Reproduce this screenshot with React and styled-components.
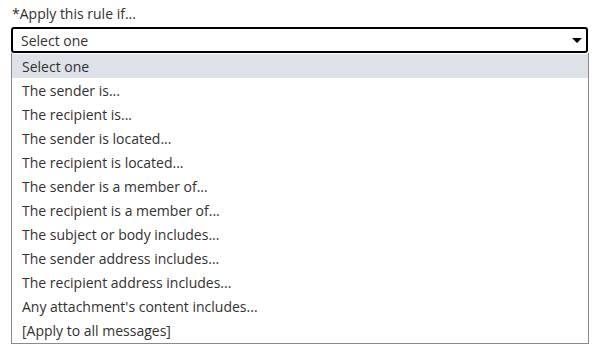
import styled, { createGlobalStyle } from 'styled-components';

const GlobalStyle = createGlobalStyle`
  *, *::before, *::after {
    box-sizing: border-box;
  }
  html, body {
    margin: 0;
    background: #ffffff;
  }
  body {
    font-family: "Open Sans", "Noto Sans", sans-serif;
    color: #323130;
  }
`;

const options = [
  'Select one',
  'The sender is...',
  'The recipient is...',
  'The sender is located...',
  'The recipient is located...',
  'The sender is a member of...',
  'The recipient is a member of...',
  'The subject or body includes...',
  'The sender address includes...',
  'The recipient address includes...',
  "Any attachment's content includes...",
  '[Apply to all messages]',
];

function App() {
  return (
    <>
      <GlobalStyle />
      <Field>
        <Label>*Apply this rule if...</Label>
        <Select>
          <span>Select one</span>
          <Caret viewBox="0 0 10 5">
            <path d="M0 0h10L5 5z" fill="#000" />
          </Caret>
        </Select>
        <List>
          {options.map((o, i) => (
            <Option key={o} $active={i === 0}>{o}</Option>
          ))}
        </List>
      </Field>
    </>
  );
}

const Field = styled.div`
  display: flex;
  flex-direction: column;
  padding: 4px 0 0 11px;
`;

const Label = styled.div`
  font-size: 14px;
  line-height: 20px;
  padding-left: 1px;
  margin-bottom: 3px;
  color: #323130;
`;

const Select = styled.div`
  display: flex;
  align-items: center;
  justify-content: space-between;
  height: 26px;
  width: 577px;
  border: 2px solid #000;
  border-radius: 3px;
  padding: 0 4px 0 8px;
  font-size: 14px;
  color: #323130;
`;

const Caret = styled.svg`
  width: 10px;
  height: 5px;
  margin-top: 1px;
`;

const List = styled.ul`
  list-style: none;
  margin: 0;
  padding: 1px 0 1px 0;
  width: 578px;
  border: 1px solid #8a8a8e;
  border-top: none;
  background: #fff;
`;

const Option = styled.li`
  height: 24px;
  line-height: 25px;
  padding-left: 10px;
  font-size: 14px;
  color: #323130;
  background: ${(p) => (p.$active ? '#dde1e8' : 'transparent')};
`;

export default App;
